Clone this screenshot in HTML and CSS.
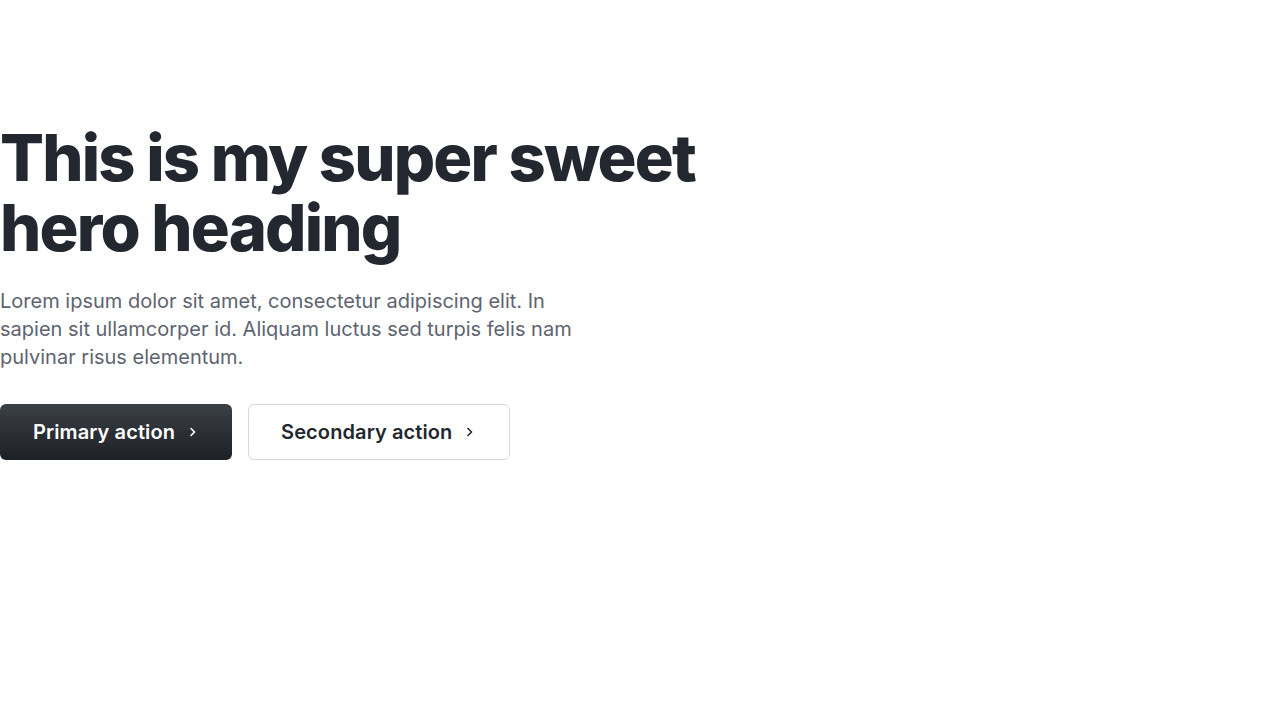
FILE: index.html
```html
<!DOCTYPE html>
<html lang="en">
<head>
<meta charset="utf-8">
<title>Hero</title>
<link rel="stylesheet" href="styles.css">
</head>
<body>
<section class="hero">
  <h1 class="hero-title">This is my super sweet<br>hero heading</h1>
  <p class="hero-text">Lorem ipsum dolor sit amet, consectetur adipiscing elit. In sapien sit ullamcorper id. Aliquam luctus sed turpis felis nam pulvinar risus elementum.</p>
  <div class="actions">
    <a class="btn btn-primary" href="#">Primary action
      <svg class="chev" width="10" height="10" viewBox="0 0 10 10" fill="none"><path d="M3 1.5 6.5 5 3 8.5" stroke="currentColor" stroke-width="1.6" stroke-linecap="round" stroke-linejoin="round"/></svg>
    </a>
    <a class="btn btn-secondary" href="#">Secondary action
      <svg class="chev" width="10" height="10" viewBox="0 0 10 10" fill="none"><path d="M3 1.5 6.5 5 3 8.5" stroke="currentColor" stroke-width="1.6" stroke-linecap="round" stroke-linejoin="round"/></svg>
    </a>
  </div>
</section>
</body>
</html>
```
FILE: styles.css
```css
* { box-sizing: border-box; }
html, body { margin: 0; padding: 0; background: #fff; }
body { font-family: Inter, "Noto Sans", sans-serif; color: #23272f; }
.hero { padding-top: 123px; }
.hero-title {
  margin: 0;
  font-size: 65px;
  line-height: 70px;
  font-weight: 800;
  letter-spacing: -1.8px;
  color: #23272f;
}
.hero-text {
  margin: 24px 0 0;
  max-width: 584px;
  font-size: 20px;
  line-height: 28px;
  color: #5d6370;
  letter-spacing: 0;
}
.actions { display: flex; gap: 16px; margin-top: 33px; }
.btn {
  display: inline-flex;
  align-items: center;
  gap: 13px;
  height: 56px;
  padding: 0 34px 0 33px;
  border-radius: 6px;
  font-size: 20px;
  font-weight: 600;
  text-decoration: none;
  letter-spacing: 0.1px;
}
.btn-primary {
  background: linear-gradient(180deg, #3b3f46 0%, #1d2026 100%);
  color: #fff;
}
.btn-secondary {
  background: #fff;
  color: #23272f;
  border: 1px solid #d5d8de;
  padding: 0 34px 0 32px;
}
.chev { flex: none; }
```
